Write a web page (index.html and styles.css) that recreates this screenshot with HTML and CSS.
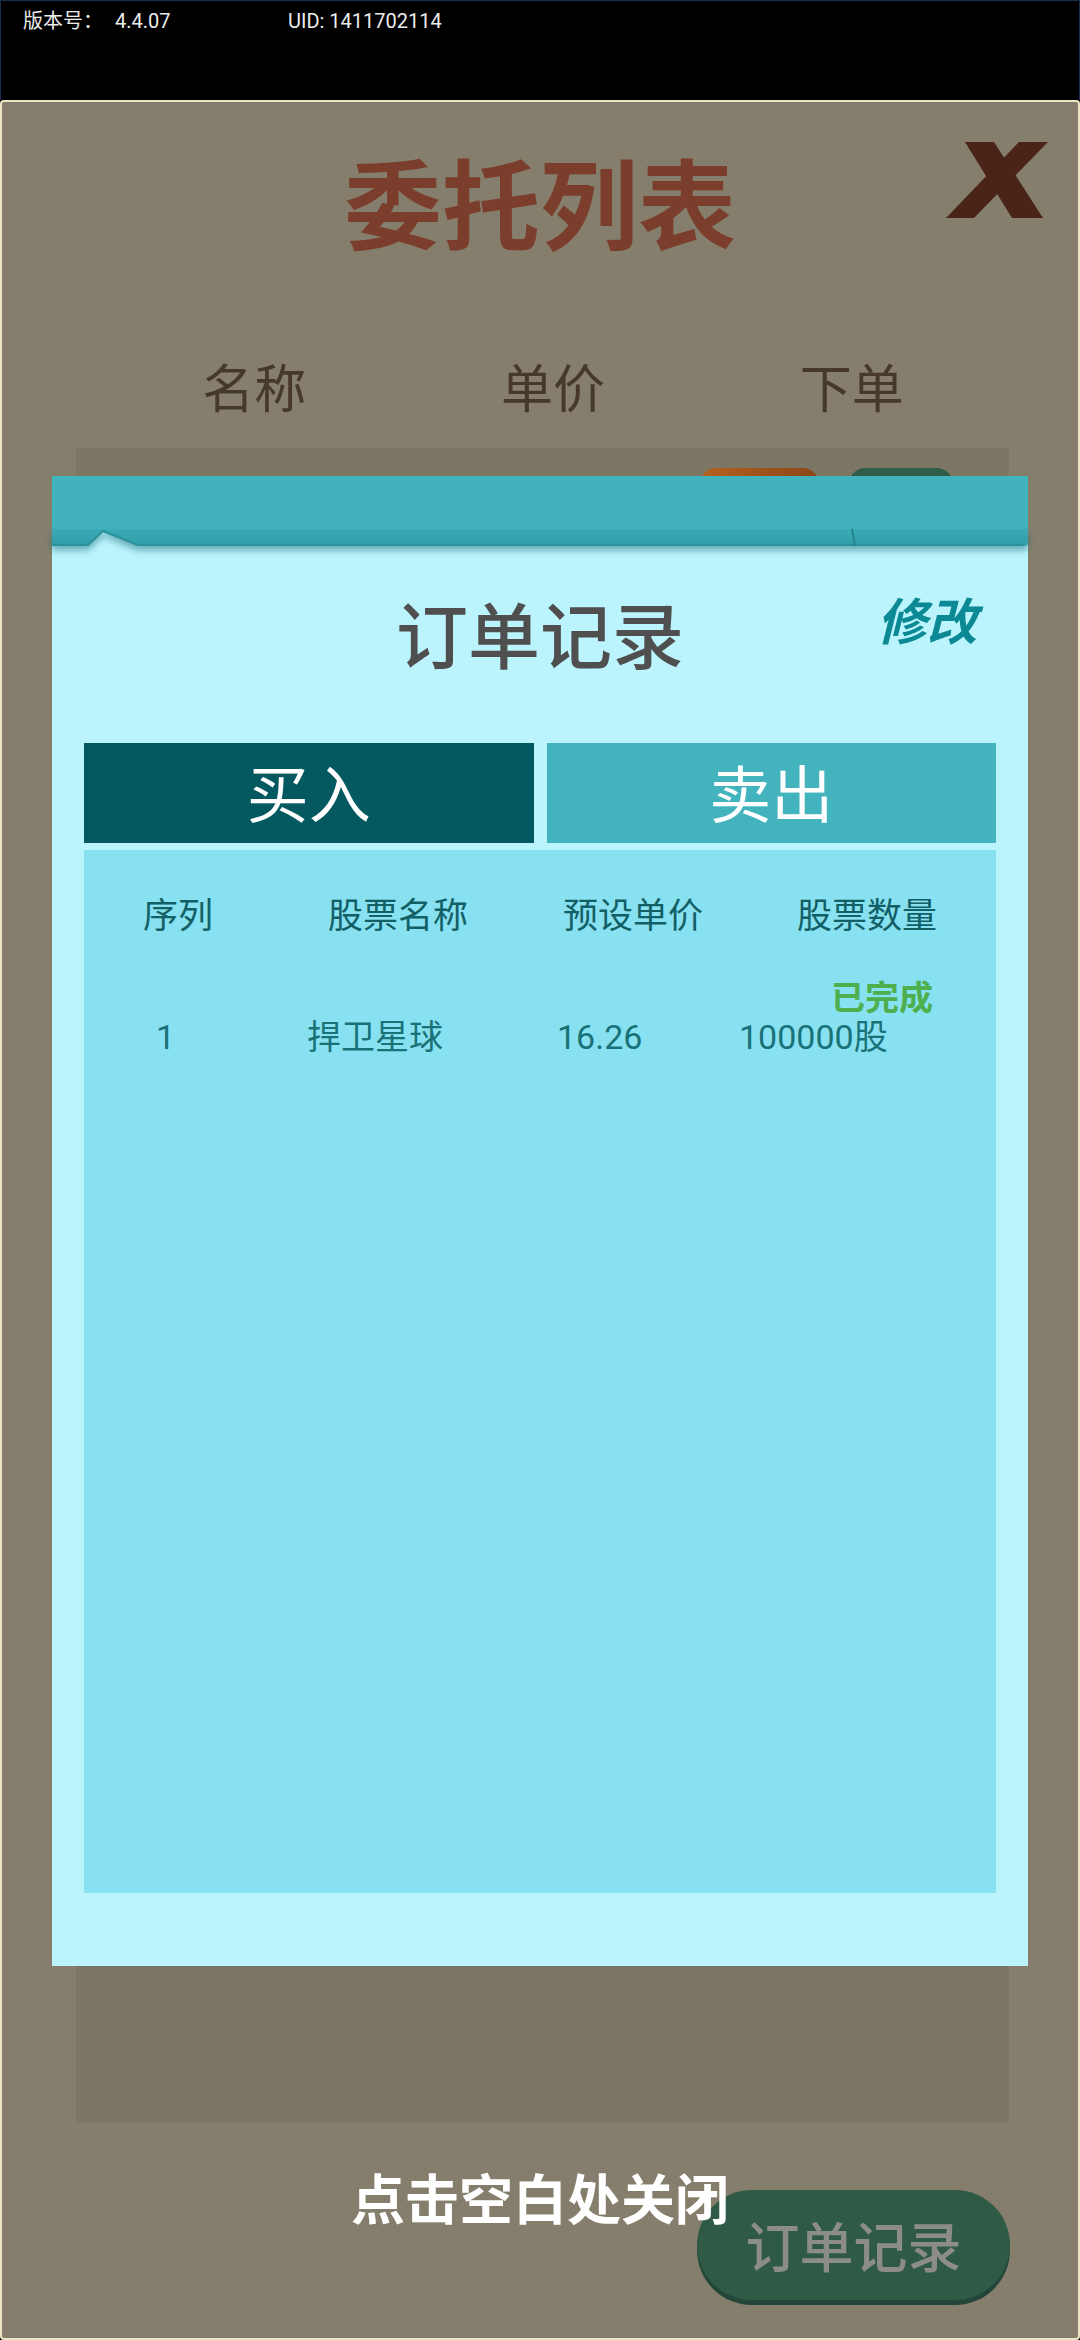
FILE: index.html
```html
<!DOCTYPE html>
<html lang="zh-CN">
  <head>
    <meta charset="UTF-8" />
    <meta name="viewport" content="width=device-width, initial-scale=1.0" />
    <title>委托列表</title>
    <link rel="stylesheet" href="styles.css">
  </head>
  <body>
    <div class="status-bar">
      <span class="version">版本号：<span class="ver-num">4.4.07</span></span>
      <span class="uid">UID: 1411702114</span>
    </div>

    <div class="panel">
      <h1 class="panel-title">委托列表</h1>
      <svg class="close" width="102" height="76" viewBox="0 0 102 76">
        <polygon points="19,0 48,0 97,76 66,76" />
        <polygon points="73,0 102,0 28,76 0,76" />
      </svg>
      <div class="columns">
        <div>名称</div>
        <div>单价</div>
        <div>下单</div>
      </div>
      <div class="order-list">
        <div class="row-actions">
          <span class="pill pill-orange"></span>
          <span class="pill pill-green"></span>
        </div>
      </div>
      <button class="records-btn">订单记录</button>

      <!-- order history popup -->
      <div class="mask">
        <div class="dialog">
          <svg class="ribbon" width="976" height="71" viewBox="0 0 976 71">
            <defs>
              <linearGradient id="edge" x1="0" y1="0" x2="0" y2="1">
                <stop offset="0" stop-color="#3aabb5" />
                <stop offset="1" stop-color="#309ea8" />
              </linearGradient>
              <filter id="fold" x="-2%" y="-60%" width="104%" height="260%">
                <feDropShadow dx="0" dy="4" stdDeviation="3.5" flood-color="#0d6670" flood-opacity="0.55" />
              </filter>
            </defs>
            <path d="M0 53 H976 V66 Q976 70 972 70 H86 L51 56 L36 70 H0 Z" fill="url(#edge)" filter="url(#fold)" />
            <polyline points="0,69 36,69 51,55 86,69 972,69" fill="none" stroke="#2b929b" stroke-width="2" />
            <rect width="976" height="53" fill="#42b3bd" />
            <path d="M800 53 L803 70" stroke="#23848d" stroke-width="2" />
          </svg>
          <div class="dialog-head">
            <h2>订单记录</h2>
            <span class="edit">修改</span>
          </div>
          <div class="tabs">
            <div class="tab active">买入</div>
            <div class="tab">卖出</div>
          </div>
          <div class="record-table">
            <div class="record-head">
              <div>序列</div>
              <div>股票名称</div>
              <div>预设单价</div>
              <div>股票数量</div>
            </div>
            <div class="record">
              <div class="record-status">已完成</div>
              <div class="record-cells">
                <div>1</div>
                <div>捍卫星球</div>
                <div>16.26</div>
                <div>100000股</div>
              </div>
            </div>
          </div>
        </div>
        <div class="hint">点击空白处关闭</div>
      </div>
    </div>
  </body>
</html>
```

FILE: styles.css
```css
body {
  margin: 0;
  width: 1080px;
  height: 2340px;
  overflow: hidden;
  background: #000;
  font-family: "Noto Sans CJK SC", sans-serif;
}
.status-bar {
  height: 100px;
  box-sizing: border-box;
  border: 1px solid #1c2b50;
  border-bottom: none;
  padding: 7px 0 0 22px;
  display: flex;
  font-family: Roboto, "Noto Sans CJK SC", sans-serif;
  font-size: 20px;
  line-height: 26px;
  color: #ececec;
}
.version {
  width: 265px;
}
.ver-num {
  margin-left: 12px;
}
.panel {
  position: relative;
  height: 2240px;
  box-sizing: border-box;
  border: 2px solid #efe4c3;
  border-radius: 4px;
  background: #857e6c;
  display: flex;
  flex-direction: column;
}
.panel-title {
  margin: 42px 0 0;
  text-align: center;
  font-size: 98px;
  line-height: 110px;
  font-weight: 700;
  color: #7b3e2c;
}
.close {
  position: absolute;
  top: 40px;
  right: 30px;
  fill: #4b2418;
}
.columns {
  display: grid;
  grid-template-columns: repeat(3, 1fr);
  margin: 102px 77px 0 103px;
  font-size: 52px;
  line-height: 60px;
  text-align: center;
  color: #46392b;
}
.order-list {
  margin: 32px 69px 0 74px;
  height: 1674px;
  background: #7c7665;
}
.row-actions {
  display: flex;
  justify-content: flex-end;
  gap: 30px;
  padding: 20px 56px 0 0;
}
.pill {
  width: 119px;
  height: 60px;
  border-radius: 16px 16px 0 0;
}
.pill-orange {
  background: linear-gradient(90deg, #b5621f, #8b4618);
}
.pill-green {
  width: 104px;
  background: #2f5d4a;
}
.records-btn {
  align-self: flex-end;
  margin: 68px 68px 0 0;
  width: 313px;
  height: 110px;
  padding: 0;
  border: none;
  border-radius: 58px;
  background: #2e5a46;
  box-shadow: 0 5px 0 #22473a;
  font: inherit;
  font-size: 54px;
  line-height: 110px;
  font-weight: 500;
  color: #8d8d88;
}

/* popup */
.mask {
  position: absolute;
  inset: 0;
  display: flex;
  flex-direction: column;
  align-items: center;
}
.dialog {
  margin-top: 374px;
  width: 976px;
  height: 1490px;
  background: #bbf4fd;
  display: flex;
  flex-direction: column;
}
.ribbon {
  display: block;
  overflow: visible;
}
.dialog-head {
  position: relative;
  margin-top: 40px;
  text-align: center;
}
.dialog-head h2 {
  margin: 0;
  font-size: 72px;
  line-height: 90px;
  font-weight: 500;
  color: #4f4f4f;
}
.edit {
  position: absolute;
  top: 6px;
  right: 51px;
  font-size: 50px;
  line-height: 50px;
  font-weight: 700;
  font-style: italic;
  color: #0b8994;
}
.tabs {
  display: flex;
  gap: 13px;
  margin: 66px 32px 0;
}
.tab {
  flex: 1;
  height: 100px;
  background: #43b3bd;
  color: #fff;
  font-size: 62px;
  line-height: 96px;
  text-align: center;
}
.tab.active {
  background: #03595f;
}
.record-table {
  margin: 7px 32px 0;
  height: 1043px;
  background: #88e1f0;
}
.record-head {
  display: grid;
  grid-template-columns: 188px 252px 218px 250px;
  padding-top: 38px;
  font-size: 35px;
  line-height: 50px;
  text-align: center;
  color: #125f66;
}
.record-status {
  margin-top: 38px;
  padding-right: 63px;
  text-align: right;
  font-size: 34px;
  line-height: 40px;
  font-weight: 700;
  color: #4daf4e;
}
.record-cells {
  display: grid;
  grid-template-columns: 151px 250px 182px auto;
  margin-top: 1px;
  padding-left: 72px;
  font-family: Roboto, "Noto Sans CJK SC", sans-serif;
  font-size: 34px;
  line-height: 40px;
  color: #1a7279;
}
.hint {
  margin-top: 201px;
  font-size: 54px;
  line-height: 60px;
  font-weight: 700;
  color: #fff;
}
```
